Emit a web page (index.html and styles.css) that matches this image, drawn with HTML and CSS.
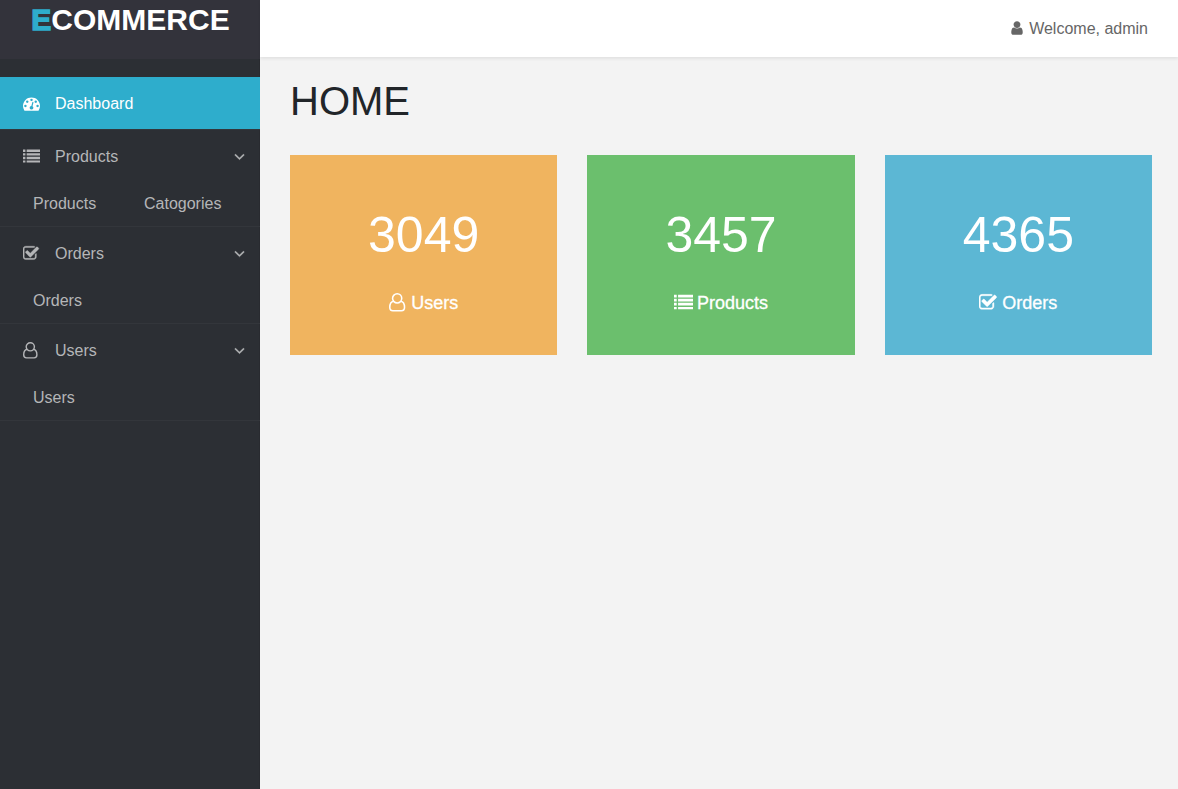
FILE: index.html
```
<!DOCTYPE html>
<html lang="en">
<head>
<meta charset="utf-8">
<title>Home</title>
<link rel="stylesheet" href="styles.css">
</head>
<body>
<svg class="sprite" aria-hidden="true">
  <symbol id="gauge" viewBox="0 0 1792 1792"><path d="M384 1152q0-53-37.500-90.500t-90.500-37.500-90.500 37.500-37.500 90.500 37.500 90.500 90.500 37.500 90.500-37.500 37.500-90.500zm192-448q0-53-37.500-90.500t-90.500-37.500-90.500 37.500-37.500 90.500 37.500 90.500 90.500 37.500 90.500-37.500 37.500-90.500zm428 481l101-382q6-26-7.500-48.500t-38.500-29.500-48 6.500-30 39.500l-101 382q-60 5-107 43.500t-63 98.500q-20 77 20 146t117 89 146-20 89-117q16-60-6-117t-72-91zm660-33q0-53-37.500-90.500t-90.500-37.500-90.500 37.500-37.500 90.500 37.500 90.500 90.500 37.500 90.500-37.500 37.500-90.500zm-640-640q0-53-37.500-90.500t-90.500-37.500-90.500 37.500-37.500 90.500 37.500 90.500 90.500 37.500 90.500-37.500 37.500-90.500zm448 192q0-53-37.500-90.500t-90.500-37.500-90.500 37.500-37.500 90.500 37.500 90.500 90.500 37.500 90.500-37.500 37.500-90.500zm320 448q0 261-141 483-19 29-54 29h-1402q-35 0-54-29-141-221-141-483 0-182 71-348t191-286 286-191 348-71 348 71 286 191 191 286 71 348z"/></symbol>
  <symbol id="list" viewBox="0 0 1792 1792"><path d="M0 160h256v256H0zM384 160h1408v256H384zM0 544h256v256H0zM384 544h1408v256H384zM0 928h256v256H0zM384 928h1408v256H384zM0 1312h256v224H0zM384 1312h1408v224H384z"/></symbol>
  <symbol id="check" viewBox="0 0 1792 1792"><path transform="translate(-64 0)" stroke="currentColor" stroke-width="40" d="M1472 930v318q0 119-84.500 203.500t-203.500 84.500h-832q-119 0-203.500-84.500t-84.500-203.500v-832q0-119 84.500-203.500t203.500-84.500h832q63 0 117 25 15 7 18 23 3 17-9 29l-49 49q-10 10-23 10-3 0-9-2-23-6-45-6h-832q-66 0-113 47t-47 113v832q0 66 47 113t113 47h832q66 0 113-47t47-113v-254q0-13 9-22l64-64q10-10 23-10 6 0 12 3 20 8 20 29zm231-489l-814 814q-24 24-57 24t-57-24l-430-430q-24-24-24-57t24-57l110-110q24-24 57-24t57 24l263 263 647-647q24-24 57-24t57 24l110 110q24 24 24 57t-24 57z"/></symbol>
  <symbol id="person" viewBox="0 0 17 17"><g fill="none" stroke="currentColor" stroke-width="1.400"><circle cx="7.300" cy="4.800" r="4.100"/><path d="M4.100 7.300C1.700 7.700.7 10.200.7 12.800c0 1.900 1 3.100 2.800 3.100h7.600c1.800 0 2.800-1.200 2.800-3.100 0-2.600-1-5.100-3.400-5.500"/></g></symbol>
  <symbol id="user" viewBox="256 0 1280 1792"><path d="M1536 1399q0 109-62.500 187t-150.500 78h-854q-88 0-150.500-78t-62.500-187q0-85 8.500-160.500t31.500-152 58.500-131 94-89 134.500-34.500q131 128 313 128t313-128q76 0 134.500 34.500t94 89 58.500 131 31.500 152 8.500 160.500zm-256-887q0 159-112.500 271.500t-271.500 112.500-271.500-112.500-112.500-271.500 112.500-271.500 271.500-112.500 271.500 112.500 112.500 271.500z"/></symbol>
  <symbol id="angle" viewBox="0 0 1792 1792"><path stroke="currentColor" stroke-width="40" d="M1395 736q0 13-10 23l-466 466q-10 10-23 10t-23-10l-466-466q-10-10-10-23t10-23l50-50q10-10 23-10t23 10l393 393 393-393q10-10 23-10t23 10l50 50q10 10 10 23z"/></symbol>
</svg>
<div class="layout">
  <aside class="sidebar">
    <div class="logo"><span class="logo-initial">E</span>COMMERCE</div>
    <nav class="nav">
      <div class="group">
        <a class="item active"><svg class="icon"><use href="#gauge"/></svg><span class="name">Dashboard</span></a>
      </div>
      <div class="group">
        <a class="item"><svg class="icon"><use href="#list"/></svg><span class="name">Products</span><svg class="arrow"><use href="#angle"/></svg></a>
        <div class="sub"><a>Products</a><a>Catogories</a></div>
      </div>
      <div class="group">
        <a class="item"><svg class="icon"><use href="#check"/></svg><span class="name">Orders</span><svg class="arrow"><use href="#angle"/></svg></a>
        <div class="sub"><a>Orders</a></div>
      </div>
      <div class="group">
        <a class="item"><svg class="icon"><use href="#person"/></svg><span class="name">Users</span><svg class="arrow"><use href="#angle"/></svg></a>
        <div class="sub"><a>Users</a></div>
      </div>
    </nav>
  </aside>
  <div class="page">
    <header class="topbar"><svg class="user-icon"><use href="#user"/></svg>Welcome, admin</header>
    <main class="content">
      <h1 class="title">HOME</h1>
      <div class="cards">
        <section class="card orange"><div class="count">3049</div><div class="label"><svg class="card-icon narrow"><use href="#person"/></svg><span class="name">Users</span></div></section>
        <section class="card green"><div class="count">3457</div><div class="label"><svg class="card-icon"><use href="#list"/></svg><span class="name">Products</span></div></section>
        <section class="card blue"><div class="count">4365</div><div class="label"><svg class="card-icon"><use href="#check"/></svg><span class="name">Orders</span></div></section>
      </div>
    </main>
  </div>
</div>
</body>
</html>
```

FILE: styles.css
```
* { box-sizing: border-box; }
body {
  margin: 0;
  background: #f3f3f3;
  font: 16px/24px "Liberation Sans", Arial, sans-serif;
}
svg { fill: currentColor; flex: none; }
.sprite { display: none; }
.layout { display: flex; height: 100vh; }
.sidebar {
  width: 260px;
  flex: none;
  background: #2c2f34;
  border-right: 1px solid #292b30;
  color: #b5b6b8;
}
.logo {
  display: flex;
  justify-content: center;
  height: 59px;
  padding-top: 2px;
  margin-right: -1px;
  background: #33333b;
  color: #fff;
  font-size: 30px;
  line-height: 36px;
  font-weight: 700;
}
.logo-initial {
  width: 21px;
  padding-left: 1px;
  color: #2eadcc;
  -webkit-text-stroke: 1.4px #2eadcc;
}
.nav { padding-top: 18px; margin-right: -1px; }
.group { border-bottom: 1px solid #33363b; }
.item {
  display: flex;
  align-items: center;
  height: 52px;
  padding: 0 12px 0 23px;
}
.name { padding-top: 2px; }
.active { background: #2eadcc; color: #fff; }
.icon { width: 17px; height: 17px; margin-right: 15px; }
.arrow { width: 17px; height: 17px; margin-left: auto; }
.sub { display: flex; height: 44px; padding-left: 33px; line-height: 44px; }
.sub a { width: 111px; }
.page { flex: 1; }
.topbar {
  display: flex;
  align-items: center;
  justify-content: flex-end;
  height: 57px;
  padding-right: 30px;
  background: #fff;
  color: #666;
  box-shadow: 0 2px 3px rgba(0, 0, 0, .07);
}
.user-icon { width: 12px; height: 16px; margin: -1px 6px 0 0; }
.content { padding: 20px 26px 0 30px; }
.title {
  margin: 0 0 30px;
  color: #212529;
  font-size: 40px;
  line-height: 48px;
  font-weight: 400;
}
.cards { display: grid; grid-template-columns: repeat(3, 1fr); gap: 30px; }
.card { height: 200px; padding-top: 50px; color: #fff; text-align: center; }
.orange { background: #f0b45f; }
.green { background: #6bbf6d; }
.blue { background: #5cb7d4; }
.count { font-size: 50px; line-height: 60px; }
.label {
  display: flex;
  align-items: center;
  justify-content: center;
  margin-top: 23px;
  font-size: 18px;
  line-height: 27px;
}
.label .name { -webkit-text-stroke: .3px currentColor; }
.card-icon { width: 19px; height: 19px; margin-right: 4px; }
.narrow { margin-right: 3px; }
```
